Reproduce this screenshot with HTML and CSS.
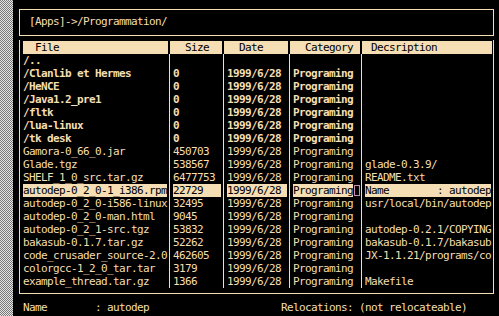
FILE: index.html
```
<!DOCTYPE html>
<html lang="en">
<head>
    <meta charset="UTF-8">
    <title>Programmation</title>
    <link rel="stylesheet" href="styles.css">
</head>
<body>
    <div class="desktop"></div>

    <div class="term">
        <div class="path-box">[Apps]-&gt;/Programmation/</div>

        <div class="files">
            <div class="row head">
                <div class="cell c-file"><span class="label">File</span></div>
                <div class="cell c-size"><span class="label">Size</span></div>
                <div class="cell c-date"><span class="label">Date</span></div>
                <div class="cell c-cat"><span class="label">Category</span></div>
                <div class="cell c-desc"><span class="label">Decsription</span></div>
            </div>

            <div class="row dir"><div class="cell c-file">/..</div><div class="cell c-size"></div><div class="cell c-date"></div><div class="cell c-cat"></div><div class="cell c-desc"></div></div>
            <div class="row dir"><div class="cell c-file">/Clanlib et Hermes</div><div class="cell c-size">0</div><div class="cell c-date">1999/6/28</div><div class="cell c-cat">Programing</div><div class="cell c-desc"></div></div>
            <div class="row dir"><div class="cell c-file">/HeNCE</div><div class="cell c-size">0</div><div class="cell c-date">1999/6/28</div><div class="cell c-cat">Programing</div><div class="cell c-desc"></div></div>
            <div class="row dir"><div class="cell c-file">/Java1.2_pre1</div><div class="cell c-size">0</div><div class="cell c-date">1999/6/28</div><div class="cell c-cat">Programing</div><div class="cell c-desc"></div></div>
            <div class="row dir"><div class="cell c-file">/fltk</div><div class="cell c-size">0</div><div class="cell c-date">1999/6/28</div><div class="cell c-cat">Programing</div><div class="cell c-desc"></div></div>
            <div class="row dir"><div class="cell c-file">/lua-linux</div><div class="cell c-size">0</div><div class="cell c-date">1999/6/28</div><div class="cell c-cat">Programing</div><div class="cell c-desc"></div></div>
            <div class="row dir"><div class="cell c-file">/tk desk</div><div class="cell c-size">0</div><div class="cell c-date">1999/6/28</div><div class="cell c-cat">Programing</div><div class="cell c-desc"></div></div>
            <div class="row"><div class="cell c-file">Gamora-0_66_0.jar</div><div class="cell c-size">450703</div><div class="cell c-date">1999/6/28</div><div class="cell c-cat">Programing</div><div class="cell c-desc"></div></div>
            <div class="row"><div class="cell c-file">Glade.tgz</div><div class="cell c-size">538567</div><div class="cell c-date">1999/6/28</div><div class="cell c-cat">Programing</div><div class="cell c-desc">glade-0.3.9/</div></div>
            <div class="row"><div class="cell c-file">SHELF_1_0_src.tar.gz</div><div class="cell c-size">6477753</div><div class="cell c-date">1999/6/28</div><div class="cell c-cat">Programing</div><div class="cell c-desc">README.txt</div></div>
            <div class="row sel"><div class="cell c-file"><span class="hl">autodep-0_2_0-1_i386.rpm</span></div><div class="cell c-size"><span class="hl">22729</span></div><div class="cell c-date"><span class="hl">1999/6/28</span></div><div class="cell c-cat"><span class="hl">Programing</span><span class="cursor"></span></div><div class="cell c-desc"><span class="hl">Name        : autodep</span></div></div>
            <div class="row"><div class="cell c-file">autodep-0_2_0-i586-linux</div><div class="cell c-size">32495</div><div class="cell c-date">1999/6/28</div><div class="cell c-cat">Programing</div><div class="cell c-desc">usr/local/bin/autodep</div></div>
            <div class="row"><div class="cell c-file">autodep-0_2_0-man.html</div><div class="cell c-size">9045</div><div class="cell c-date">1999/6/28</div><div class="cell c-cat">Programing</div><div class="cell c-desc"></div></div>
            <div class="row"><div class="cell c-file">autodep-0_2_1-src.tgz</div><div class="cell c-size">53832</div><div class="cell c-date">1999/6/28</div><div class="cell c-cat">Programing</div><div class="cell c-desc">autodep-0.2.1/COPYING</div></div>
            <div class="row"><div class="cell c-file">bakasub-0.1.7.tar.gz</div><div class="cell c-size">52262</div><div class="cell c-date">1999/6/28</div><div class="cell c-cat">Programing</div><div class="cell c-desc">bakasub-0.1.7/bakasub</div></div>
            <div class="row"><div class="cell c-file">code_crusader_source-2.0</div><div class="cell c-size">462605</div><div class="cell c-date">1999/6/28</div><div class="cell c-cat">Programing</div><div class="cell c-desc">JX-1.1.21/programs/co</div></div>
            <div class="row"><div class="cell c-file">colorgcc-1_2_0_tar.tar</div><div class="cell c-size">3179</div><div class="cell c-date">1999/6/28</div><div class="cell c-cat">Programing</div><div class="cell c-desc"></div></div>
            <div class="row"><div class="cell c-file">example_thread.tar.gz</div><div class="cell c-size">1366</div><div class="cell c-date">1999/6/28</div><div class="cell c-cat">Programing</div><div class="cell c-desc">Makefile</div></div>
        </div>

        <div class="status">
            <span class="status-name">Name        : autodep</span>
            <span>Relocations: (not relocateable)</span>
        </div>
    </div>
</body>
</html>
```

FILE: styles.css
```
* {
    margin: 0;
    padding: 0;
    box-sizing: border-box;
}

body {
    background: #000;
    color: #f5deb3;
    font-family: "DejaVu Sans Mono", "Liberation Mono", monospace;
    font-size: 11px;
    letter-spacing: -0.62px;
    line-height: 13px;
    height: 316px;
    overflow: hidden;
    display: flex;
}

/* dithered desktop showing at the left edge */
.desktop {
    width: 13px;
    background-image: conic-gradient(#e4e4e4 25%, #787878 0 50%, #e4e4e4 0 75%, #787878 0);
    background-size: 2px 2px;
}

.term {
    flex: 1;
    padding-left: 6px;
}

.path-box {
    margin-top: 9px;
    width: 475px;
    height: 27px;
    border: 1px solid #f5deb3;
    padding: 5px 0 0 9px;
    white-space: pre;
}

.files {
    margin-top: 4px;
    width: 475px;
    border: 1px solid #f5deb3;
    border-top: none;
    padding: 1px 0 5px 3px;
}

.row {
    display: flex;
    height: 13px;
}

.cell {
    white-space: pre;
    overflow-x: clip;
    overflow-y: visible;
    border-left: 1px solid #f5deb3;
    padding-left: 3px;
}

.c-file { width: 146px; border-left: none; padding-left: 0; }
.c-size { width: 54px; }
.c-date { width: 66px; }
.c-cat  { width: 72px; }
.c-desc { width: 132px; }

.head .cell {
    border-left-color: #000;
    padding-left: 0;
}

.head .label {
    display: block;
    height: 13px;
    margin-right: 1px;
    background: #f5deb3;
    color: #000;
    padding-left: 15px;
}

.head .c-file .label { padding-left: 12px; }
.head .c-desc .label { padding-left: 9px; }

.dir {
    font-weight: bold;
}

.sel .cell {
    display: flex;
    align-items: center;
}

.hl {
    display: block;
    height: 13px;
    background: #f5deb3;
    color: #000;
}

.c-file .hl { width: 144px; }
.c-size .hl { width: 48px; }
.c-date .hl { width: 60px; }
.c-cat .hl  { width: 60px; }
.c-desc .hl { width: 126px; }

.cursor {
    width: 6px;
    height: 11px;
    margin-left: 1px;
    border: 1px solid #c98ab8;
}

.status {
    margin-top: 7px;
    padding-left: 4px;
    display: flex;
    white-space: pre;
}

.status-name {
    width: 258px;
}
```
